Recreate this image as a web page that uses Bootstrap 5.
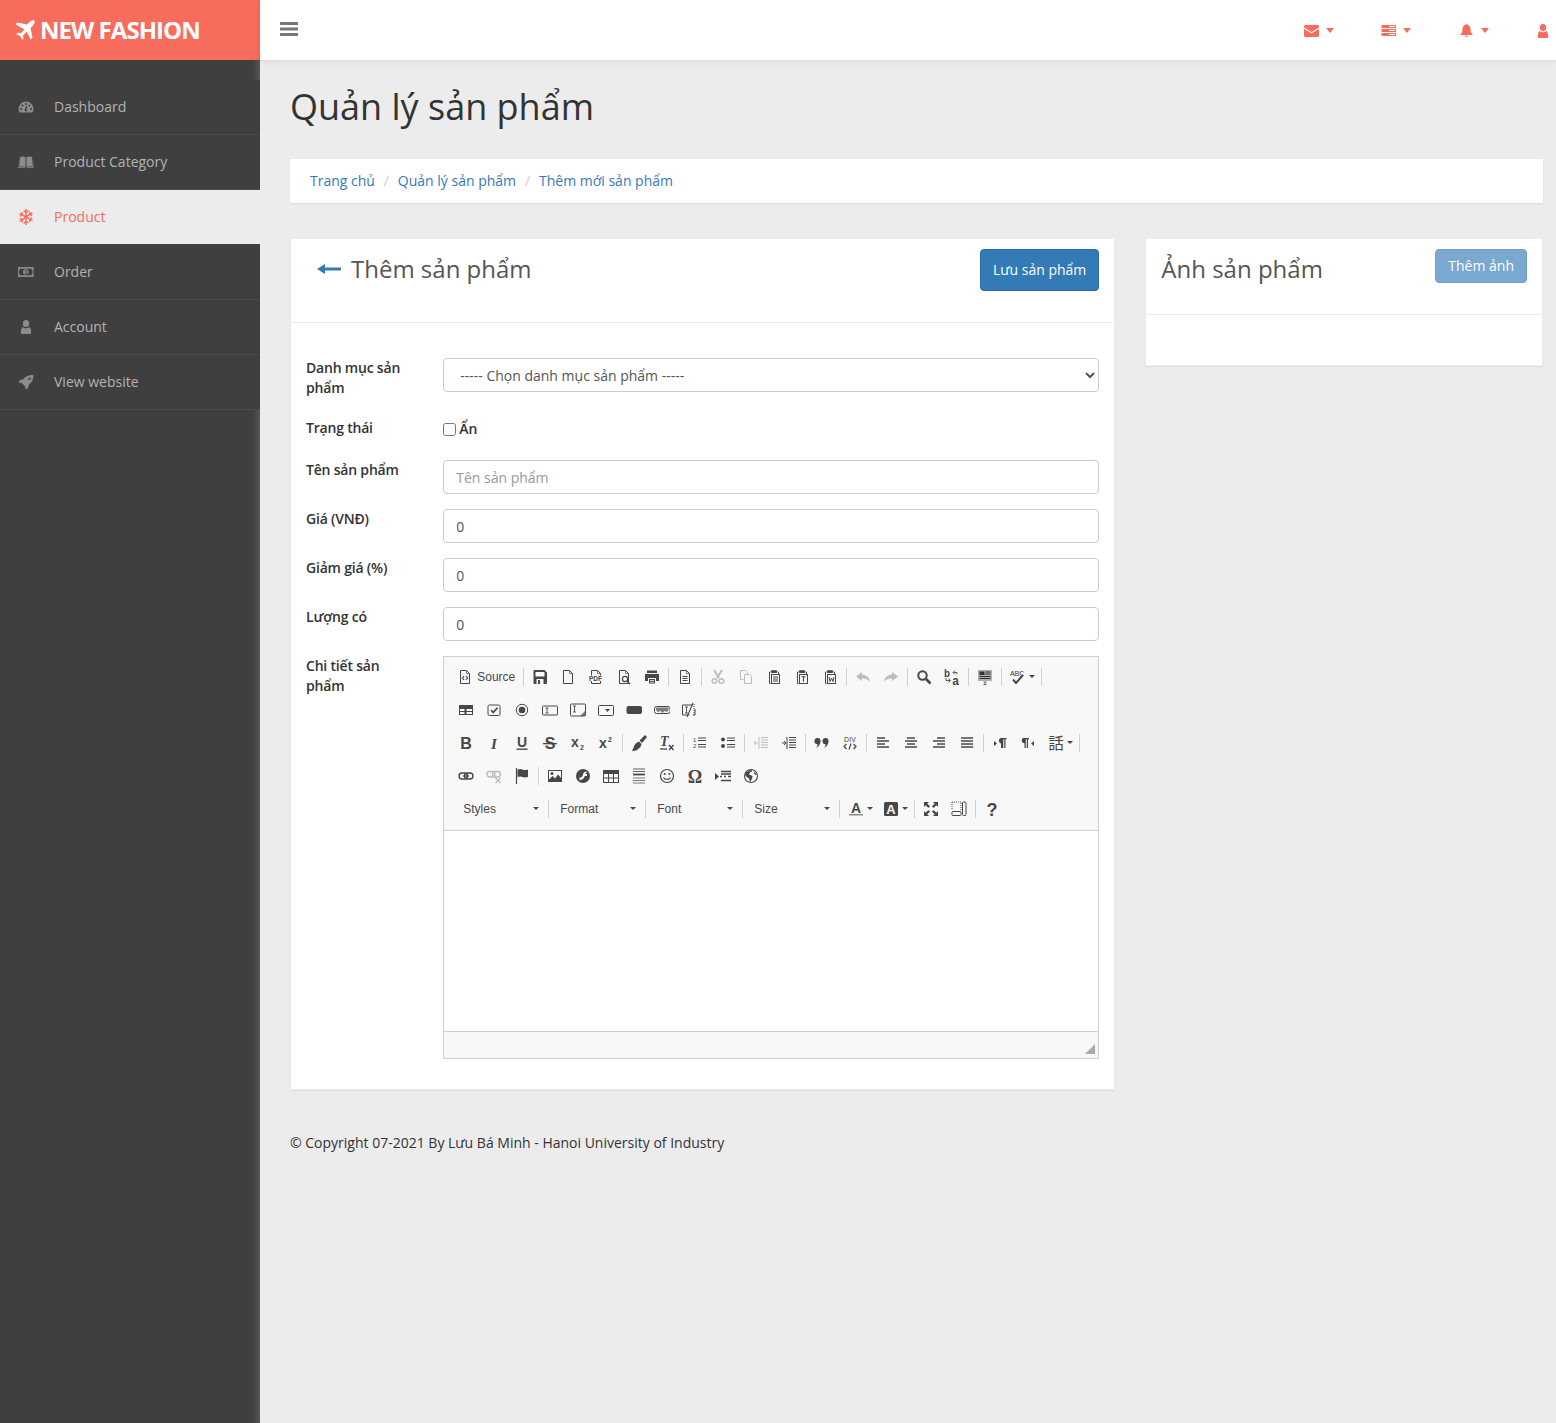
<!DOCTYPE html>
<html lang="vi">
<head>
  <meta charset="UTF-8">
  <meta name="viewport" content="width=device-width, initial-scale=1.0">
  <title>New Fashion - Thêm sản phẩm</title>
  <link href="https://cdn.jsdelivr.net/npm/bootstrap@5.3.0/dist/css/bootstrap.min.css" rel="stylesheet">
  <style>
    body {
      font-family: "Open Sans", sans-serif;
      font-size: 14px;
      line-height: 20px;
      color: #333;
      background: #ececec;
    }
    .app-shell { display: flex; min-height: 1423px; }
    .side-col { width: 260px; flex: none; background: #3f3f3f; box-shadow: inset -7px 0 6px -4px rgba(255, 255, 255, .14); }
    .brand-bar {
      height: 60px;
      background: #f76c5c;
      color: #fff;
      font-size: 24px;
      font-weight: 700;
      letter-spacing: -.95px;
      line-height: 60px;
      padding-left: 15px;
      display: flex;
      align-items: center;
      gap: 5px;
    }
    .side-menu { padding-top: 20px; }
    .side-link {
      height: 55px;
      display: flex;
      align-items: center;
      color: #b3b3b3;
      background: #3f3f3f;
      text-decoration: none;
      border-bottom: 1px solid #4a4a4a;
      padding-left: 18px;
    }
    .side-link svg { width: 16px; height: 16px; margin-right: 20px; fill: #8c8c8c; flex: none; }
    .side-link.is-on { background: #ececec; color: #f76c5c; border-bottom-color: #3f3f3f; }
    .side-link.is-on svg { fill: #f76c5c; }
    .main-col { flex: 1; min-width: 0; }
    .top-bar {
      height: 60px;
      background: #fff;
      box-shadow: 0 2px 6px rgba(0, 0, 0, .08);
      display: flex;
      align-items: center;
      position: relative;
    }
    .burger { margin-left: 20px; margin-top: -3px; width: 18px; height: 14px; }
    .top-icons { margin-left: auto; display: flex; align-items: center; margin-top: 1px; padding-right: 4px; }
    .top-item { display: flex; align-items: center; width: 77.5px; }
    .top-item:last-child { width: 16px; }
    .top-item svg { fill: #f76c5c; width: 15px; height: 13px; }
    .top-item:last-child svg { width: 16px; height: 16px; margin-left: -1px; }
    .top-item i { margin-left: 7px; border: 4.5px solid transparent; border-top: 5px solid #f76c5c; border-bottom: 0; }
    .page-body { padding: 0 13px 0 30px; }
    .page-title { font-size: 36px; line-height: 40px; font-weight: 400; margin: 0; padding: 27px 0 32px; color: #333; }
    .crumb-bar {
      background: #fff;
      height: 44px;
      margin-bottom: 36px;
      padding: 0 20px;
      align-items: center;
      border-radius: 0;
      box-shadow: 0 1px 2px rgba(0, 0, 0, .08);
      --bs-breadcrumb-divider-color: #ccc;
      --bs-breadcrumb-item-padding-x: 8.9px;
    }
    .crumb-bar a { color: #337ab7; text-decoration: none; }
    .form-grid { --bs-gutter-x: 30px; }
    .panel {
      --bs-card-border-radius: 0;
      --bs-card-inner-border-radius: 0;
      border: 1px solid #ececec;
      border-top: 0;
      box-shadow: 0 1px 1px rgba(0, 0, 0, .05);
    }
    .panel-head {
      display: flex;
      justify-content: space-between;
      padding: 10px 15px 0;
      background: #fff;
      border-bottom: 1px solid #ececec;
    }
    .panel-title { font-size: 24px; line-height: 40px; font-weight: 400; margin: 0; color: #555; display: flex; align-items: center; }
    .back-link svg { width: 26px; height: 12px; margin: 0 9px 0 10px; fill: #337ab7; }
    .save-btn {
      --bs-btn-bg: #337ab7;
      --bs-btn-border-color: #2e6da4;
      --bs-btn-disabled-bg: #337ab7;
      --bs-btn-disabled-border-color: #2e6da4;
      --bs-btn-padding-x: 12px;
      --bs-btn-font-size: 14px;
      --bs-btn-border-radius: 4px;
      height: 42px;
      line-height: 20px;
    }
    .add-btn { height: 34px; --bs-btn-disabled-opacity: .65; }
    .form-body { padding: 35px 15px 30px; }
    .field-row { --bs-gutter-x: 30px; margin-bottom: 15px; }
    .field-label { font-weight: 600; color: #333; padding-top: 0; letter-spacing: -.2px; }
    .field-label.is-mid { padding-top: 5px; }
    .field-input {
      height: 34px;
      font-size: 14px;
      line-height: 20px;
      padding: 6px 12px;
      color: #555;
      border-color: #ccc;
      border-radius: 4px;
    }
    .field-input::placeholder { color: #999; }
    select.field-input { appearance: auto; background-color: #fff; }
    .hide-check { display: flex; align-items: center; gap: 3px; font-weight: 600; height: 32px; }
    .hide-check input { width: 13px; height: 13px; margin: 0; }
    .rte-box { border: 1px solid #d1d1d1; height: 403px; display: flex; flex-direction: column; }
    .rte-bar { background: #f8f8f8; border-bottom: 1px solid #d1d1d1; padding: 3px 0 4px 8px; height: 174px; }
    .rte-line { display: flex; align-items: center; height: 33px; }
    .rte-btn { width: 28px; height: 24px; display: flex; align-items: center; justify-content: center; flex: none; color: #474747; }
    .rte-btn svg { width: 16px; height: 16px; display: block; overflow: visible; }
    .rte-btn.is-off { color: #bcbcbc; }
    .rte-sep { width: 1px; height: 18px; background: #d1d1d1; margin: 0 2px; flex: none; }
    .rte-src { width: 69px; justify-content: flex-start; padding-left: 5px; gap: 4px; }
    .rte-txt { font: 12px/16px "Liberation Sans", Arial, sans-serif; color: #484848; }
    .rte-more { width: 35px; justify-content: flex-start; padding-left: 6px; gap: 3px; }
    .rte-arrow { display: inline-block; border: 3px solid transparent; border-top: 3px solid #474747; border-bottom: 0; flex: none; }
    .rte-combo { width: 92px; height: 24px; display: flex; align-items: center; justify-content: space-between; padding: 0 7px 0 9px; flex: none; }
    .rte-combo:first-child { margin-left: 2px; }
    .rte-edit { flex: 1; background: #fff; }
    .rte-foot { height: 27px; background: #f8f8f8; border-top: 1px solid #d1d1d1; position: relative; }
    .rte-grip {
      position: absolute;
      right: 3px;
      bottom: 4px;
      border-style: solid;
      border-width: 0 0 10px 10px;
      border-color: transparent transparent #aaa transparent;
    }
    .page-foot { margin: 43px 0 0; color: #333; }
  </style>
</head>
<body>

<!-- Bo icon dung chung -->
<svg width="0" height="0" class="position-absolute" aria-hidden="true">
  <defs>
    <!-- menu -->
    <symbol id="m-plane" viewBox="0 0 16 16"><path d="M15.4.6c.9.9.3 2.4-1 3.7l-2 2 1.6 7.6-1.5 1.6-3.1-6.2-3 3 .4 2.3-1.2 1.2-1.5-3-3-1.500 1.200-1.200 2.300.4 3-3L.4 3.400 2 1.900l7.600 1.600 2-2C12.900.3 14.500-.3 15.400.6z"/></symbol>
    <symbol id="m-gauge" viewBox="0 0 16 16"><path d="M8 2.5A7.500 7.500 0 0 0 .5 10c0 1.500.4 2.700 1.100 3.500h12.800c.7-.8 1.100-2 1.100-3.500A7.500 7.500 0 0 0 8 2.500zM3 11a1 1 0 1 1 0-2 1 1 0 0 1 0 2zm1.500-3.500a1 1 0 1 1 0-2 1 1 0 0 1 0 2zM8 6a1 1 0 1 1 0-2 1 1 0 0 1 0 2zm1.200 6a1.500 1.500 0 0 1-2.500-1.300l1.600-3.900.9.300-.7 3.800c.4.300.7.700.7 1.100zM11.500 7.500a1 1 0 1 1 0-2 1 1 0 0 1 0 2zM13 11a1 1 0 1 1 0-2 1 1 0 0 1 0 2z"/></symbol>
    <symbol id="m-book" viewBox="0 0 16 16"><path d="M2 3c2-.8 4.500-.8 5.500.2V13c-1.200-.7-3.500-.8-6.500-.2zM8.500 3.200c1-1 3.500-1 5.500-.2l1 9.800c-3-.6-5.300-.5-6.500.2zM.6 5 0 14c2.500-.4 6-.6 8 .3 2-.9 5.500-.7 8-.3l-.6-9 .3 8.300c-2.500-.4-5.700-.3-7.700.6-2-.9-5.200-1-7.700-.6z"/></symbol>
    <symbol id="m-snow" viewBox="0 0 16 16"><path d="M7.300 0h1.400v2.100l1.300-1 .8 1-2.100 1.700v2.500l2.200-1.300.4-2.600 1.300.2-.3 1.600 1.800-1 .7 1.200-1.800 1 1.500.6-.5 1.200-2.500-1L9.400 8l2.100 1.300 2.500-1 .5 1.200-1.500.6 1.800 1-.7 1.200-1.800-1 .3 1.600-1.300.2-.4-2.600-2.200-1.300v2.500l2.100 1.700-.8 1-1.300-1V16H7.300v-2.100l-1.300 1-.8-1 2.100-1.700V9.700l-2.200 1.300-.4 2.600-1.300-.2.300-1.600-1.800 1-.7-1.200 1.800-1-1.500-.6.500-1.200 2.500 1L6.600 8 4.500 6.700l-2.500 1-.5-1.200 1.500-.6-1.800-1 .7-1.200 1.800 1-.3-1.600 1.300-.2.400 2.600 2.200 1.300V3.800L5.200 2.100l.8-1 1.300 1z"/></symbol>
    <symbol id="m-money" viewBox="0 0 16 16"><path fill-rule="evenodd" d="M0 3h15.500v10H0zm1.800 1.800c0 1-.4 1.500-.8 1.700v3c.4.200.8.700.8 1.700h11.900c0-1 .4-1.500.8-1.700v-3c-.4-.2-.8-.7-.8-1.700zM7.800 5.300a2.700 2.700 0 1 1 0 5.400 2.700 2.700 0 0 1 0-5.400zM7 6.800V7.500l.7-.3v2.300H7v.7h2.300v-.7h-.7V6.200h-.6z"/></symbol>
    <symbol id="m-user" viewBox="0 0 16 16"><path d="M8 1a3.200 3.500 0 1 1 0 7 3.200 3.500 0 0 1 0-7zM4 15a1.200 1.200 0 0 1-1.200-1.300c.1-2.500.5-5.200 2-5.700.7.700 1.900 1.300 3.200 1.300s2.500-.6 3.200-1.300c1.500.5 1.900 3.200 2 5.700A1.200 1.200 0 0 1 12 15z"/></symbol>
    <symbol id="m-rocket" viewBox="0 0 16 16"><path d="M15.500 1C15.700 5 14 8.300 10.800 10.800l-.6 3.200-2.700 1.500-.3-3.100-3.500-3.500-3.100-.3L2 5.900l3.200-.6C7.700 2 11 .8 15.500 1zM11.500 3.500a1.200 1.200 0 1 0 0 2.400 1.200 1.200 0 0 0 0-2.400z"/></symbol>
    <symbol id="m-mail" viewBox="0 0 15 13"><path d="M0 3.400 7.500 8 15 3.400V2.500C15 1.700 14.300 1 13.500 1h-12C.7 1 0 1.700 0 2.500zM0 4.800v6.700c0 .8.700 1.500 1.500 1.500h12c.8 0 1.500-.7 1.500-1.500V4.800L7.500 9.400z"/></symbol>
    <symbol id="m-server" viewBox="0 0 15 13"><path fill-rule="evenodd" d="M.5 1H15v3H.5zm0 4H15v3H.5zm0 4H15v3H.5zM8 2v1h6V2zm0 4v1h6V6zm0 4v1h6v-1z"/></symbol>
    <symbol id="m-bell" viewBox="0 0 15 13"><path d="M7.500 0c.5 0 .8.300.8.800 2 .4 3.200 2 3.200 4 0 3 .8 4.700 2.500 6.200H1c1.700-1.500 2.500-3.200 2.500-6.200 0-2 1.200-3.600 3.200-4 0-.5.300-.8.800-.8zM5.800 11.700h3.400a1.700 1.300 0 0 1-3.400 0z"/></symbol>

    <!-- cong cu soan thao -->
    <g id="doc"><path d="M3.500 1.500h6l3 3v10h-9z" fill="none" stroke="currentColor"/><path d="M9.500 1.500v3h3" fill="none" stroke="currentColor" stroke-width=".7"/></g>
    <symbol id="e-source" viewBox="0 0 16 16"><use href="#doc"/><path d="M7 7 5.500 9 7 11M9 7l1.500 2L9 11" fill="none" stroke="currentColor" stroke-width="1.200"/></symbol>
    <symbol id="e-save" viewBox="0 0 16 16"><path fill-rule="evenodd" fill="currentColor" d="M2.500 1h10L15 3.500V14a1 1 0 0 1-1 1H2.500a1 1 0 0 1-1-1V2a1 1 0 0 1 1-1zM3.500 3v4.500h9V3zM4.500 10v5h7v-5zm1.500 1h2v4H6z"/></symbol>
    <symbol id="e-new" viewBox="0 0 16 16"><use href="#doc"/></symbol>
    <symbol id="e-pdf" viewBox="0 0 16 16"><use href="#doc"/><rect x="0" y="6.500" width="15" height="5.500" fill="#f8f8f8"/><text x="7.500" y="11.500" font-family="Liberation Sans" font-size="6.500" font-weight="700" text-anchor="middle" fill="currentColor">PDF</text></symbol>
    <symbol id="e-preview" viewBox="0 0 16 16"><use href="#doc"/><circle cx="9" cy="10" r="2.600" fill="#f8f8f8" stroke="currentColor" stroke-width="1.200"/><path d="m11 12 3 3" stroke="currentColor" stroke-width="1.500"/></symbol>
    <symbol id="e-print" viewBox="0 0 16 16"><path fill-rule="evenodd" fill="currentColor" d="M3 1.500h10V4H3zM1.500 5h13a.5.5 0 0 1 .5.500V12h-3V9H4v3H1V5.500a.5.500 0 0 1 .5-.5zM5 10h6v4.500H5zm1 1v.8h4V11zm0 1.700v.8h4v-.8z"/></symbol>
    <symbol id="e-tpl" viewBox="0 0 16 16"><use href="#doc"/><path d="M5.500 7.500h5M5.500 9.500h5M5.500 11.500h5" stroke="currentColor"/></symbol>
    <symbol id="e-cut" viewBox="0 0 16 16"><path d="M4 1l5 8M12 1 7 9" stroke="currentColor" stroke-width="2" fill="none"/><circle cx="4.500" cy="12" r="2.300" fill="none" stroke="currentColor" stroke-width="1.500"/><circle cx="11.500" cy="12" r="2.300" fill="none" stroke="currentColor" stroke-width="1.500"/></symbol>
    <symbol id="e-copy" viewBox="0 0 16 16"><path d="M2.500 1.500h5l2 2v2M2.500 1.500v9h3M6.500 5.500h5l2 2v7h-7z" fill="none" stroke="currentColor"/></symbol>
    <g id="clip"><path d="M4.500 3H3.500v11.500h1M11.500 3h1v5" fill="none" stroke="currentColor"/><rect x="5" y="1.200" width="6" height="2.800" rx=".7" fill="currentColor"/><rect x="5.500" y="5.500" width="8" height="9" fill="#f8f8f8" stroke="currentColor"/></g>
    <symbol id="e-paste" viewBox="0 0 16 16"><use href="#clip"/><path d="M7 8h5M7 10h5M7 12h5" stroke="currentColor"/></symbol>
    <symbol id="e-paste-t" viewBox="0 0 16 16"><use href="#clip"/><path d="M7.500 7.800h4M9.500 7.800v5" stroke="currentColor" stroke-width="1.100"/></symbol>
    <symbol id="e-paste-w" viewBox="0 0 16 16"><use href="#clip"/><path d="m7 8 1 4.500L9.500 9l1.500 3.500L12 8" fill="none" stroke="currentColor"/></symbol>
    <symbol id="e-undo" viewBox="0 0 16 16"><path fill="currentColor" d="M7 3 1 7.500 7 12V9.300c3 0 5.500.7 8 3.200-.5-4-3.500-6.500-8-7z"/></symbol>
    <symbol id="e-redo" viewBox="0 0 16 16"><path fill="currentColor" d="M9 3l6 4.500L9 12V9.300c-3 0-5.500.7-8 3.200.5-4 3.500-6.500 8-7z"/></symbol>
    <symbol id="e-find" viewBox="0 0 16 16"><circle cx="6.500" cy="6.500" r="4.200" fill="none" stroke="currentColor" stroke-width="2"/><path d="m10 10 4.500 4.500" stroke="currentColor" stroke-width="2.600"/></symbol>
    <symbol id="e-replace" viewBox="0 0 16 16"><text x="0" y="7.500" font-family="Liberation Mono" font-size="10" font-weight="700" fill="currentColor">b</text><text x="8" y="15.500" font-family="Liberation Mono" font-size="12" font-weight="700" fill="currentColor">a</text><path d="M13 5V3.500H9.500M11 1.500 9 3.500l2 2M2 9v2.500h4M4.500 9.500l2 2-2 2" fill="none" stroke="currentColor" stroke-width=".9"/></symbol>
    <symbol id="e-all" viewBox="0 0 16 16"><rect x="1" y="1" width="14" height="11" fill="#b0b0b0"/><path d="M8.500 3h5M8.500 5h5M2.500 7.500h11M2.500 9.500h11" stroke="#333"/><path fill="#333" d="M2.500 2.500h5v3.500h-5z"/><path d="M6.500 13h3M8 13v2.500M6.500 15.500h3" stroke="currentColor" stroke-width=".8"/></symbol>
    <symbol id="e-spell" viewBox="0 0 16 16"><text x="0" y="7" font-family="Liberation Mono" font-size="8" textLength="14" fill="currentColor">ABC</text><path d="m3 10.500 3 3.500 7-8" fill="none" stroke="currentColor" stroke-width="2"/></symbol>

    <symbol id="e-form" viewBox="0 0 16 16"><path fill-rule="evenodd" fill="currentColor" d="M1 3h14v10H1zm1 4v2h4.500V7zm0 3v2h4.500v-2zm6.500-3v2H14V7zm0 3v2H14v-2z"/></symbol>
    <symbol id="e-check" viewBox="0 0 16 16"><rect x="2" y="3" width="12" height="10.500" rx="1.500" fill="none" stroke="currentColor"/><path d="m5 8 2.300 2.500L11.500 5.800" fill="none" stroke="currentColor" stroke-width="1.700"/></symbol>
    <symbol id="e-radio" viewBox="0 0 16 16"><circle cx="8" cy="8" r="5.700" fill="none" stroke="currentColor"/><circle cx="8" cy="8" r="3.300" fill="currentColor"/></symbol>
    <symbol id="e-field" viewBox="0 0 16 16"><rect x=".5" y="4" width="15" height="9" rx="1" fill="none" stroke="currentColor"/><path d="M3.500 6h3M5 6v5M3.500 11h3" stroke="currentColor" stroke-width=".9"/></symbol>
    <symbol id="e-area" viewBox="0 0 16 16"><rect x=".5" y="2" width="15" height="12" rx="1" fill="none" stroke="currentColor"/><path d="M3 4h3M4.500 4v6M3 10h3" stroke="currentColor" stroke-width=".9"/><path fill="currentColor" d="m15 9-5 5h5z" opacity=".7"/></symbol>
    <symbol id="e-sel" viewBox="0 0 16 16"><rect x=".5" y="3.500" width="15" height="10" rx="1" fill="none" stroke="currentColor"/><path fill="currentColor" d="M7 7h5l-2.500 3z"/></symbol>
    <symbol id="e-btn" viewBox="0 0 16 16"><rect x=".5" y="4" width="15.500" height="8" rx="2" fill="currentColor"/></symbol>
    <symbol id="e-img-btn" viewBox="0 0 16 16"><rect x=".5" y="4.500" width="15.500" height="7" rx="2" fill="none" stroke="currentColor"/><path d="M2 5.500h12.500V8l-1.500 2-2.500-1-2 2-2-2-3 1L2 8z" fill="currentColor" opacity=".7"/></symbol>
    <symbol id="e-hidden" viewBox="0 0 16 16"><path d="M11 3H.5v10h7M13 7v6h-2" fill="none" stroke="currentColor"/><path d="M3 5h3M4.500 5v6M3 11h3" stroke="currentColor" stroke-width=".9"/><path d="M5 15 11 1" stroke="currentColor" stroke-width="1.100"/><path d="M12 2v12" stroke="currentColor" stroke-dasharray="1 1"/></symbol>

    <symbol id="e-brush" viewBox="0 0 16 16"><path fill="currentColor" d="M14 0l2 2-5 6-2.500-2.500zM8 6.500 10.500 9l-1 3L6 15c-2 1-4 1-5.500.5 1.500-1 2-2.500 2.500-4 .5-2 2-4 5-5z"/></symbol>
    <symbol id="e-clear" viewBox="0 0 16 16"><text x="1" y="11" font-family="Liberation Serif" font-size="14" font-weight="700" font-style="italic" fill="currentColor">T</text><path d="M1 14h7" stroke="currentColor" stroke-width="1.300"/><path d="m10 10 4.500 5M14.500 10 10 15" stroke="currentColor" stroke-width="1.400"/></symbol>
    <symbol id="e-ol" viewBox="0 0 16 16"><text x="1" y="6.500" font-family="Liberation Sans" font-size="6" fill="currentColor">1</text><text x="1" y="13" font-family="Liberation Sans" font-size="6" fill="currentColor">2</text><path d="M6 3h8M6 5.500h8M6 9.500h8M6 12h8" stroke="currentColor"/></symbol>
    <symbol id="e-ul" viewBox="0 0 16 16"><circle cx="3" cy="4.500" r="2" fill="currentColor"/><circle cx="3" cy="11" r="2" fill="currentColor"/><path d="M7 3h8M7 5.500h8M7 9.500h8M7 12h8" stroke="currentColor"/></symbol>
    <symbol id="e-out" viewBox="0 0 16 16"><path d="M8 2.500h7M8 5h7M8 7.500h7M8 10h7M8 12.500h7M6 2v12" stroke="currentColor"/><path d="M5 8H1M3 6 1 8l2 2" fill="none" stroke="currentColor"/></symbol>
    <symbol id="e-in" viewBox="0 0 16 16"><path d="M8 2.500h7M8 5h7M8 7.500h7M8 10h7M8 12.500h7M6 2v12" stroke="currentColor"/><path d="M1 8h4M3 6l2 2-2 2" fill="none" stroke="currentColor"/></symbol>
    <symbol id="e-quote" viewBox="0 0 16 16"><path fill="currentColor" d="M3.500 3a3 3 0 0 1 3 3.200C6.500 9.500 4.500 12 1.500 13c1.300-1 2-2 2.300-3.600A3.200 3.200 0 0 1 3.500 3zM11.500 3a3 3 0 0 1 3 3.200c0 3.300-2 5.800-5 6.800 1.300-1 2-2 2.300-3.600A3.200 3.200 0 0 1 11.500 3z"/></symbol>
    <symbol id="e-div" viewBox="0 0 16 16"><text x="8" y="7" font-family="Liberation Sans" font-size="7" text-anchor="middle" textLength="12" fill="currentColor">DIV</text><path d="M4.500 9 2 11.500 4.500 14M11.500 9 14 11.500 11.500 14M9 8.500 7 14.500" fill="none" stroke="currentColor" stroke-width="1.200"/></symbol>
    <symbol id="e-left" viewBox="0 0 16 16"><path d="M2 3h8M2 6h12M2 9h8M2 12h12" stroke="currentColor" stroke-width="1.700"/></symbol>
    <symbol id="e-center" viewBox="0 0 16 16"><path d="M4 3h8M2 6h12M4 9h8M2 12h12" stroke="currentColor" stroke-width="1.700"/></symbol>
    <symbol id="e-right" viewBox="0 0 16 16"><path d="M6 3h8M2 6h12M6 9h8M2 12h12" stroke="currentColor" stroke-width="1.700"/></symbol>
    <symbol id="e-just" viewBox="0 0 16 16"><path d="M2 3h12M2 6h12M2 9h12M2 12h12" stroke="currentColor" stroke-width="1.700"/></symbol>
    <symbol id="e-ltr" viewBox="0 0 16 16"><path fill="currentColor" d="M8.500 3h6v1.200h-1V13h-1.200V4.200h-1V13H9V8.500a3 3 0 0 1-.5-5.500zM2 6l3 2.500L2 11z"/></symbol>
    <symbol id="e-rtl" viewBox="0 0 16 16"><path fill="currentColor" d="M3 3h6v1.200H8V13H6.800V4.200h-1V13H4.500V8.500A3 3 0 0 1 3 3zM14 6l-3 2.500 3 2.500z"/></symbol>
    <symbol id="e-lang" viewBox="0 0 16 16"><text x="8" y="14" font-family="Noto Sans CJK JP" font-size="15.500" text-anchor="middle" fill="currentColor">話</text></symbol>

    <symbol id="e-link" viewBox="0 0 16 16"><rect x="1" y="5" width="8.500" height="6" rx="3" fill="none" stroke="currentColor" stroke-width="1.400"/><rect x="6.500" y="5" width="8.500" height="6" rx="3" fill="none" stroke="currentColor" stroke-width="1.400"/><path d="M5 8h6" stroke="currentColor" stroke-width="1.200"/></symbol>
    <symbol id="e-unlink" viewBox="0 0 16 16"><rect x="1" y="3.500" width="8" height="5.500" rx="2.700" fill="none" stroke="currentColor" stroke-width="1.300"/><rect x="6.500" y="3.500" width="8" height="5.500" rx="2.700" fill="none" stroke="currentColor" stroke-width="1.300"/><path d="m9.500 10 5 5M14.500 10l-5 5" stroke="currentColor" stroke-width="1.400"/></symbol>
    <symbol id="e-anchor" viewBox="0 0 16 16"><path d="M2.500 0v16" stroke="currentColor" stroke-width="1.200"/><path fill="currentColor" d="M3.500 1.500c2-.8 3.500-.8 5 0s3 .6 5.500 0V9c-2.500.6-4 .7-5.500 0s-3-.8-5 0z"/></symbol>
    <symbol id="e-image" viewBox="0 0 16 16"><path fill-rule="evenodd" fill="currentColor" d="M1 2h14v12H1zm1 1v8.500l3.500-3.500 2.500 2.500 3-4 3 3.500V3zm3 1a1.500 1.500 0 1 1 0 3 1.500 1.500 0 0 1 0-3z"/></symbol>
    <symbol id="e-flash" viewBox="0 0 16 16"><circle cx="8" cy="8" r="7" fill="currentColor"/><path d="M11.500 3.500c-2.300 0-3 1-3.500 3-.5 1.800-1 3-3.500 3v2.500c3.300 0 4.700-1.800 5.300-4H12V6h-2c.3-.6.800-.8 1.500-.8z" fill="#f8f8f8"/></symbol>
    <symbol id="e-table" viewBox="0 0 16 16"><path fill-rule="evenodd" fill="currentColor" d="M0 2h16v13H0zm1 4v3.500h4V6zm5 0v3.500h4V6zm5 0v3.500h4V6zM1 10.500V14h4v-3.500zm5 0V14h4v-3.500zm5 0V14h4v-3.500z"/></symbol>
    <symbol id="e-hr" viewBox="0 0 16 16"><path d="M2 1h12M2 3.500h12" stroke="currentColor" opacity=".85"/><path d="M2 6.500h12" stroke="currentColor" stroke-width="1.800"/><path d="M2 10h12M2 12.500h12M2 15h12" stroke="currentColor" opacity=".7"/></symbol>
    <symbol id="e-smile" viewBox="0 0 16 16"><circle cx="8" cy="8" r="6.500" fill="none" stroke="currentColor" stroke-width="1.200"/><circle cx="5.700" cy="6" r="1" fill="currentColor"/><circle cx="10.300" cy="6" r="1" fill="currentColor"/><path d="M4.500 9.500c1 2.500 6 2.500 7 0" fill="none" stroke="currentColor" stroke-width="1.100"/></symbol>
    <symbol id="e-omega" viewBox="0 0 16 16"><text x="8" y="14.500" font-family="Liberation Serif" font-size="18" font-weight="700" text-anchor="middle" fill="currentColor">Ω</text></symbol>
    <symbol id="e-break" viewBox="0 0 16 16"><path d="M6 3.500h10M6 12.500h10M6 6h10" stroke="currentColor" stroke-width="1.600"/><path d="M5 8.500h2M9 8.500h2M13 8.500h3" stroke="currentColor" stroke-width="1.400"/><path fill="currentColor" d="m0 5 4 3.500L0 12z"/></symbol>
    <symbol id="e-frame" viewBox="0 0 16 16"><circle cx="8" cy="8" r="6.500" fill="none" stroke="currentColor" stroke-width="1.100"/><path fill="currentColor" d="M3 4c1 0 2-.5 2.500-1.500L9 2c.5 1-.5 2-1.500 2-.5 1-2 1.500-1 3 1.500 0 3 .5 3 2s-1.500 3-2 5c-1-.5-1-2.500-1.500-3.500C4 9 2 8 2 6.500zM11 4c1 0 2 1 2.500 2.500L12 7c-.5-1-1-2-1-3z"/></symbol>

    <symbol id="e-color" viewBox="0 0 16 16"><text x="8" y="11.500" font-family="Liberation Sans" font-size="14" font-weight="700" text-anchor="middle" fill="currentColor">A</text><rect x="1" y="13" width="14" height="1.500" fill="#8c8c8c"/></symbol>
    <symbol id="e-bg" viewBox="0 0 16 16"><rect x="1" y="1" width="14" height="14" rx="1.500" fill="currentColor"/><text x="8" y="13" font-family="Liberation Sans" font-size="13" font-weight="700" text-anchor="middle" fill="#f8f8f8">A</text></symbol>
    <symbol id="e-max" viewBox="0 0 16 16"><path fill="currentColor" d="M1 1h5L4.300 2.700 7 5.300 5.300 7 2.700 4.300 1 6zM15 1v5l-1.700-1.700L10.700 7 9 5.300l2.700-2.600L10 1zM1 15v-5l1.700 1.700L5.300 9 7 10.700l-2.700 2.600L6 15zM15 15h-5l1.700-1.700L9 10.700 10.700 9l2.600 2.700L15 10z"/></symbol>
    <symbol id="e-blocks" viewBox="0 0 16 16"><path d="M1 1h9v8M1 1v8" fill="none" stroke="currentColor" stroke-dasharray="1 1"/><rect x="1" y="10.500" width="9" height="4" rx="1" fill="none" stroke="currentColor"/><rect x="11.500" y="1" width="3.500" height="13.500" rx="1" fill="none" stroke="currentColor"/></symbol>
    <symbol id="e-help" viewBox="0 0 16 16"><text x="8" y="15" font-family="Liberation Sans" font-size="18" font-weight="700" text-anchor="middle" fill="currentColor">?</text></symbol>
  </defs>
</svg>

<div class="app-shell">
  <!-- Sidebar -->
  <aside class="side-col">
    <div class="brand-bar">
      <svg width="20" height="20" fill="#fff"><use href="#m-plane"/></svg>
      <span>NEW FASHION</span>
    </div>
    <nav class="nav flex-column side-menu">
      <a class="side-link" href="#"><svg><use href="#m-gauge"/></svg>Dashboard</a>
      <a class="side-link" href="#"><svg><use href="#m-book"/></svg>Product Category</a>
      <a class="side-link is-on" href="#"><svg><use href="#m-snow"/></svg>Product</a>
      <a class="side-link" href="#"><svg><use href="#m-money"/></svg>Order</a>
      <a class="side-link" href="#"><svg><use href="#m-user"/></svg>Account</a>
      <a class="side-link" href="#"><svg><use href="#m-rocket"/></svg>View website</a>
    </nav>
  </aside>

  <div class="main-col">
    <!-- Topbar -->
    <header class="top-bar">
      <svg class="burger" viewBox="0 0 18 14" fill="#777"><rect width="18" height="3" rx=".5"/><rect y="5.500" width="18" height="3" rx=".5"/><rect y="11" width="18" height="3" rx=".5"/></svg>
      <div class="top-icons">
        <div class="top-item"><svg><use href="#m-mail"/></svg><i></i></div>
        <div class="top-item"><svg><use href="#m-server"/></svg><i></i></div>
        <div class="top-item"><svg><use href="#m-bell"/></svg><i></i></div>
        <div class="top-item"><svg><use href="#m-user"/></svg></div>
      </div>
    </header>

    <main class="page-body">
      <h1 class="page-title">Quản lý sản phẩm</h1>
      <ol class="breadcrumb crumb-bar">
        <li class="breadcrumb-item"><a href="#">Trang chủ</a></li>
        <li class="breadcrumb-item"><a href="#">Quản lý sản phẩm</a></li>
        <li class="breadcrumb-item"><a href="#">Thêm mới sản phẩm</a></li>
      </ol>

      <div class="row form-grid">
        <div class="col-8">
          <div class="card panel">
            <div class="panel-head" style="height: 84px">
              <h2 class="panel-title align-self-start">
                <a href="#" class="d-flex back-link"><svg viewBox="0 0 26 12"><path d="M1 6 9 1v3.500h16v3H9V11z"/></svg></a>Thêm sản phẩm
              </h2>
              <button type="button" class="btn btn-primary save-btn">Lưu sản phẩm</button>
            </div>
            <form class="form-body">
              <div class="row field-row">
                <label class="col-2 field-label">Danh mục sản phẩm</label>
                <div class="col-10">
                  <select class="form-control field-input">
                    <option>----- Chọn danh mục sản phẩm -----</option>
                  </select>
                </div>
              </div>
              <div class="row field-row">
                <label class="col-2 field-label is-mid">Trạng thái</label>
                <div class="col-10">
                  <label class="hide-check"><input type="checkbox"> Ẩn</label>
                </div>
              </div>
              <div class="row field-row">
                <label class="col-2 field-label">Tên sản phẩm</label>
                <div class="col-10"><input class="form-control field-input" placeholder="Tên sản phẩm"></div>
              </div>
              <div class="row field-row">
                <label class="col-2 field-label">Giá (VNĐ)</label>
                <div class="col-10"><input class="form-control field-input" value="0"></div>
              </div>
              <div class="row field-row">
                <label class="col-2 field-label">Giảm giá (%)</label>
                <div class="col-10"><input class="form-control field-input" value="0"></div>
              </div>
              <div class="row field-row">
                <label class="col-2 field-label">Lượng có</label>
                <div class="col-10"><input class="form-control field-input" value="0"></div>
              </div>
              <div class="row field-row mb-0">
                <label class="col-2 field-label">Chi tiết sản phẩm</label>
                <div class="col-10">
                  <div class="rte-box">
                    <div class="rte-bar">
                      <div class="rte-line">
                        <span class="rte-btn rte-src"><svg><use href="#e-source"/></svg><span class="rte-txt">Source</span></span>
                        <span class="rte-sep"></span>
                        <span class="rte-btn"><svg><use href="#e-save"/></svg></span>
                        <span class="rte-btn"><svg><use href="#e-new"/></svg></span>
                        <span class="rte-btn"><svg><use href="#e-pdf"/></svg></span>
                        <span class="rte-btn"><svg><use href="#e-preview"/></svg></span>
                        <span class="rte-btn"><svg><use href="#e-print"/></svg></span>
                        <span class="rte-sep"></span>
                        <span class="rte-btn"><svg><use href="#e-tpl"/></svg></span>
                        <span class="rte-sep"></span>
                        <span class="rte-btn is-off"><svg><use href="#e-cut"/></svg></span>
                        <span class="rte-btn is-off"><svg><use href="#e-copy"/></svg></span>
                        <span class="rte-btn"><svg><use href="#e-paste"/></svg></span>
                        <span class="rte-btn"><svg><use href="#e-paste-t"/></svg></span>
                        <span class="rte-btn"><svg><use href="#e-paste-w"/></svg></span>
                        <span class="rte-sep"></span>
                        <span class="rte-btn is-off"><svg><use href="#e-undo"/></svg></span>
                        <span class="rte-btn is-off"><svg><use href="#e-redo"/></svg></span>
                        <span class="rte-sep"></span>
                        <span class="rte-btn"><svg><use href="#e-find"/></svg></span>
                        <span class="rte-btn"><svg><use href="#e-replace"/></svg></span>
                        <span class="rte-sep"></span>
                        <span class="rte-btn"><svg><use href="#e-all"/></svg></span>
                        <span class="rte-sep"></span>
                        <span class="rte-btn rte-more"><svg><use href="#e-spell"/></svg><i class="rte-arrow"></i></span>
                        <span class="rte-sep"></span>
                      </div>
                      <div class="rte-line">
                        <span class="rte-btn"><svg><use href="#e-form"/></svg></span>
                        <span class="rte-btn"><svg><use href="#e-check"/></svg></span>
                        <span class="rte-btn"><svg><use href="#e-radio"/></svg></span>
                        <span class="rte-btn"><svg><use href="#e-field"/></svg></span>
                        <span class="rte-btn"><svg><use href="#e-area"/></svg></span>
                        <span class="rte-btn"><svg><use href="#e-sel"/></svg></span>
                        <span class="rte-btn"><svg><use href="#e-btn"/></svg></span>
                        <span class="rte-btn"><svg><use href="#e-img-btn"/></svg></span>
                        <span class="rte-btn"><svg><use href="#e-hidden"/></svg></span>
                      </div>
                      <div class="rte-line">
                        <span class="rte-btn"><svg><text x="8" y="14" font-family="Liberation Sans" font-size="16" font-weight="700" text-anchor="middle" fill="currentColor">B</text></svg></span>
                        <span class="rte-btn"><svg><text x="8" y="13.500" font-family="Liberation Serif" font-size="15" font-weight="700" font-style="italic" text-anchor="middle" fill="currentColor">I</text></svg></span>
                        <span class="rte-btn"><svg><text x="8" y="12" font-family="Liberation Sans" font-size="14" font-weight="700" text-anchor="middle" fill="currentColor">U</text><rect x="2.500" y="13.500" width="11" height="1.400" fill="currentColor"/></svg></span>
                        <span class="rte-btn"><svg><text x="8" y="14" font-family="Liberation Sans" font-size="16" font-weight="700" text-anchor="middle" fill="currentColor">S</text><rect x="1" y="8" width="14" height="1.300" fill="currentColor"/></svg></span>
                        <span class="rte-btn"><svg><text x="1" y="11.500" font-family="Liberation Sans" font-size="14" font-weight="700" fill="currentColor">x</text><text x="10" y="15" font-family="Liberation Sans" font-size="7" font-weight="700" fill="currentColor">2</text></svg></span>
                        <span class="rte-btn"><svg><text x="1" y="13" font-family="Liberation Sans" font-size="14" font-weight="700" fill="currentColor">x</text><text x="10" y="7" font-family="Liberation Sans" font-size="7" font-weight="700" fill="currentColor">2</text></svg></span>
                        <span class="rte-sep"></span>
                        <span class="rte-btn"><svg><use href="#e-brush"/></svg></span>
                        <span class="rte-btn"><svg><use href="#e-clear"/></svg></span>
                        <span class="rte-sep"></span>
                        <span class="rte-btn"><svg><use href="#e-ol"/></svg></span>
                        <span class="rte-btn"><svg><use href="#e-ul"/></svg></span>
                        <span class="rte-sep"></span>
                        <span class="rte-btn is-off"><svg><use href="#e-out"/></svg></span>
                        <span class="rte-btn"><svg><use href="#e-in"/></svg></span>
                        <span class="rte-sep"></span>
                        <span class="rte-btn"><svg><use href="#e-quote"/></svg></span>
                        <span class="rte-btn"><svg><use href="#e-div"/></svg></span>
                        <span class="rte-sep"></span>
                        <span class="rte-btn"><svg><use href="#e-left"/></svg></span>
                        <span class="rte-btn"><svg><use href="#e-center"/></svg></span>
                        <span class="rte-btn"><svg><use href="#e-right"/></svg></span>
                        <span class="rte-btn"><svg><use href="#e-just"/></svg></span>
                        <span class="rte-sep"></span>
                        <span class="rte-btn"><svg><use href="#e-ltr"/></svg></span>
                        <span class="rte-btn"><svg><use href="#e-rtl"/></svg></span>
                        <span class="rte-btn rte-more"><svg><use href="#e-lang"/></svg><i class="rte-arrow"></i></span>
                        <span class="rte-sep"></span>
                      </div>
                      <div class="rte-line">
                        <span class="rte-btn"><svg><use href="#e-link"/></svg></span>
                        <span class="rte-btn is-off"><svg><use href="#e-unlink"/></svg></span>
                        <span class="rte-btn"><svg><use href="#e-anchor"/></svg></span>
                        <span class="rte-sep"></span>
                        <span class="rte-btn"><svg><use href="#e-image"/></svg></span>
                        <span class="rte-btn"><svg><use href="#e-flash"/></svg></span>
                        <span class="rte-btn"><svg><use href="#e-table"/></svg></span>
                        <span class="rte-btn"><svg><use href="#e-hr"/></svg></span>
                        <span class="rte-btn"><svg><use href="#e-smile"/></svg></span>
                        <span class="rte-btn"><svg><use href="#e-omega"/></svg></span>
                        <span class="rte-btn"><svg><use href="#e-break"/></svg></span>
                        <span class="rte-btn"><svg><use href="#e-frame"/></svg></span>
                      </div>
                      <div class="rte-line">
                        <span class="rte-combo"><span class="rte-txt">Styles</span><i class="rte-arrow"></i></span>
                        <span class="rte-sep"></span>
                        <span class="rte-combo"><span class="rte-txt">Format</span><i class="rte-arrow"></i></span>
                        <span class="rte-sep"></span>
                        <span class="rte-combo"><span class="rte-txt">Font</span><i class="rte-arrow"></i></span>
                        <span class="rte-sep"></span>
                        <span class="rte-combo"><span class="rte-txt">Size</span><i class="rte-arrow"></i></span>
                        <span class="rte-sep"></span>
                        <span class="rte-btn rte-more"><svg><use href="#e-color"/></svg><i class="rte-arrow"></i></span>
                        <span class="rte-btn rte-more"><svg><use href="#e-bg"/></svg><i class="rte-arrow"></i></span>
                        <span class="rte-sep"></span>
                        <span class="rte-btn"><svg><use href="#e-max"/></svg></span>
                        <span class="rte-btn"><svg><use href="#e-blocks"/></svg></span>
                        <span class="rte-sep"></span>
                        <span class="rte-btn"><svg><use href="#e-help"/></svg></span>
                      </div>
                    </div>
                    <div class="rte-edit"></div>
                    <div class="rte-foot"><span class="rte-grip"></span></div>
                  </div>
                </div>
              </div>
            </form>
          </div>
        </div>

        <div class="col-4">
          <div class="card panel">
            <div class="panel-head" style="height: 76px">
              <h2 class="panel-title align-self-start">Ảnh sản phẩm</h2>
              <button type="button" class="btn btn-primary save-btn add-btn" disabled>Thêm ảnh</button>
            </div>
            <div class="card-body" style="height: 50px"></div>
          </div>
        </div>
      </div>

      <p class="page-foot">© Copyright 07-2021 By Lưu Bá Minh - Hanoi University of Industry</p>
    </main>
  </div>
</div>

<script src="https://cdn.jsdelivr.net/npm/bootstrap@5.3.0/dist/js/bootstrap.bundle.min.js"></script>
</body>
</html>
